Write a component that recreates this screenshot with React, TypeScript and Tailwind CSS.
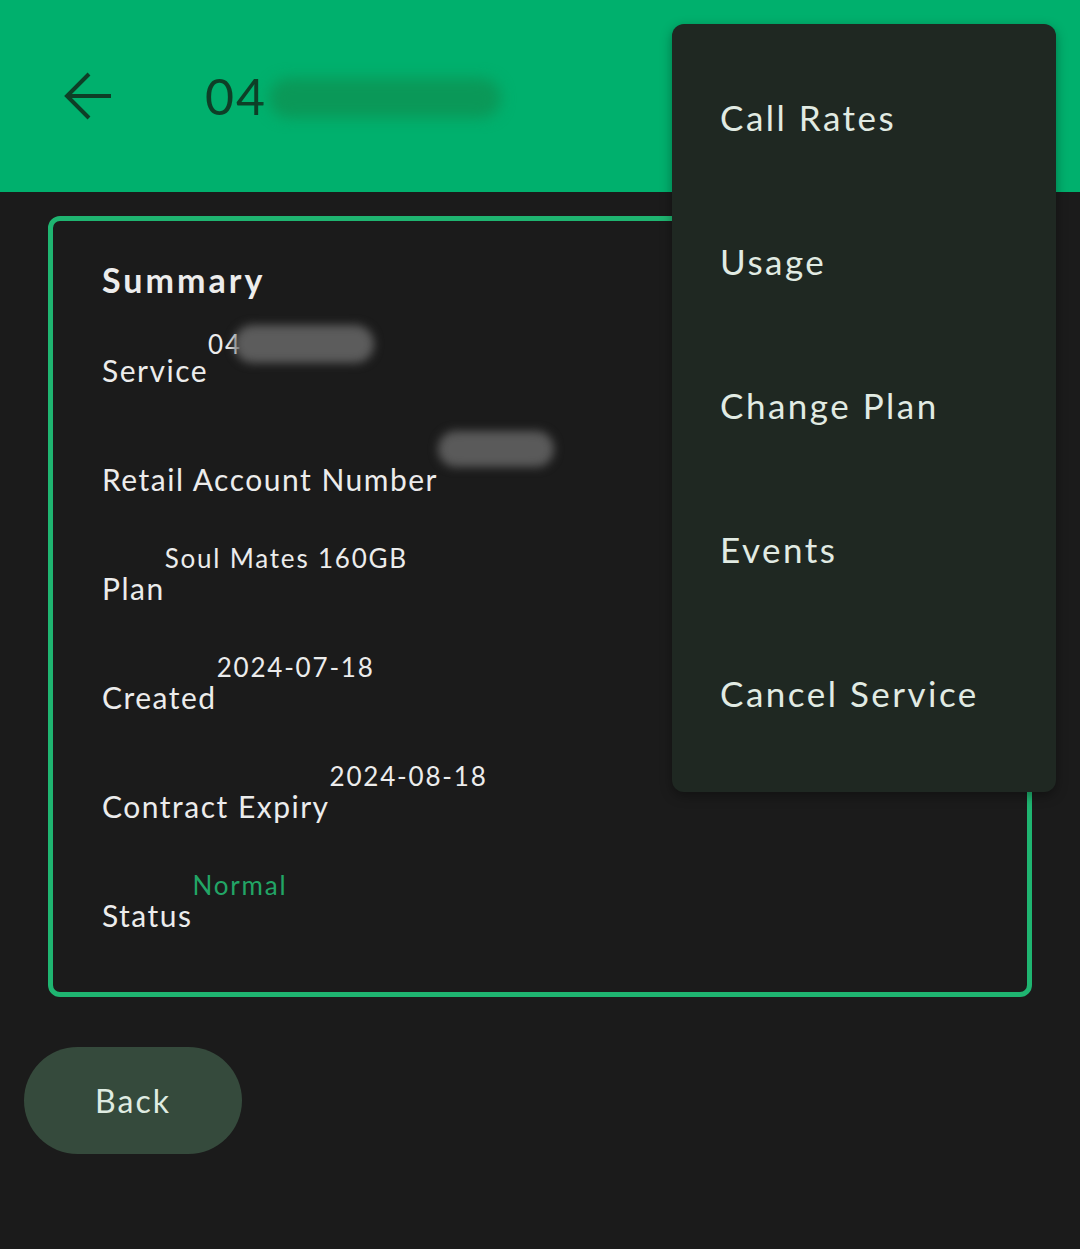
import React from 'react';

const rows: { label: string; value: string; blur?: 'tail' | 'full'; accent?: boolean }[] = [
    { label: 'Service', value: '04', blur: 'tail' },
    { label: 'Retail Account Number', value: '', blur: 'full' },
    { label: 'Plan', value: 'Soul Mates 160GB' },
    { label: 'Created', value: '2024-07-18' },
    { label: 'Contract Expiry', value: '2024-08-18' },
    { label: 'Status', value: 'Normal', accent: true },
];

const menuItems = ['Call Rates', 'Usage', 'Change Plan', 'Events', 'Cancel Service'];

const App: React.FC = () => {
    return (
        <div className="relative min-h-[1249px] bg-[#1b1b1b] font-['Lato','Noto_Sans',sans-serif]">
            {/* Header */}
            <div className="h-[192px] bg-[#00b06d] flex items-center pl-[64px]">
                <svg width="48" height="48" viewBox="0 0 48 48" fill="none" className="shrink-0">
                    <path d="M25 2 L3 24 L25 46 M3 24 H47" stroke="#0e3f27" strokeWidth="4" />
                </svg>
                <div className="ml-[93px] flex items-center">
                    <span className="text-[50px] leading-[58px] tracking-[2px] text-[#0e3f27]">04</span>
                    <span className="ml-[2px] mt-[4px] h-[40px] w-[232px] rounded-full bg-[#0a9858] blur-[7px]"></span>
                </div>
            </div>

            {/* Summary card */}
            <div className="mx-[48px] mt-[24px] border-[5px] border-[#1fb571] rounded-[12px] pt-[39px] pb-[59px] pl-[49px] pr-[40px]">
                <h2 className="text-[34px] leading-[40px] tracking-[3px] font-bold text-[#ececec]">Summary</h2>
                <div className="mt-[25px] flex flex-col gap-[46px]">
                    {rows.map(row => (
                        <div key={row.label} className="flex items-start">
                            <span className="mt-[27px] text-[30px] leading-[36px] tracking-[1.5px] text-[#ececec] whitespace-nowrap">{row.label}</span>
                            <span className={`text-[26px] leading-[30px] tracking-[1.8px] whitespace-nowrap flex items-center ${row.accent ? 'text-[#22a566]' : 'text-[#ececec]'}`}>
                                {row.value}
                                {row.blur === 'tail' && (
                                    <span className="-ml-[8px] h-[38px] w-[140px] rounded-full bg-[#5c5c5c] blur-[5px]"></span>
                                )}
                                {row.blur === 'full' && (
                                    <span className="-mt-[3px] h-[36px] w-[116px] rounded-full bg-[#5a5a5a] blur-[5px]"></span>
                                )}
                            </span>
                        </div>
                    ))}
                </div>
            </div>

            {/* Back button */}
            <div className="mt-[50px] ml-[24px]">
                <button className="h-[107px] w-[218px] rounded-full bg-[#354a3c] text-[32px] tracking-[2px] text-[#dfece2]">
                    Back
                </button>
            </div>

            {/* Overflow menu */}
            <div className="absolute left-[672px] top-[24px] w-[384px] rounded-[12px] bg-[#1f2822] py-[24px] shadow-[0_4px_12px_rgba(0,0,0,0.35)]">
                {menuItems.map(item => (
                    <div key={item} className="h-[144px] flex items-center pl-[48px] pb-[6px] text-[35px] tracking-[2.5px] text-[#e1ebe3]">
                        {item}
                    </div>
                ))}
            </div>
        </div>
    );
};

export default App;
